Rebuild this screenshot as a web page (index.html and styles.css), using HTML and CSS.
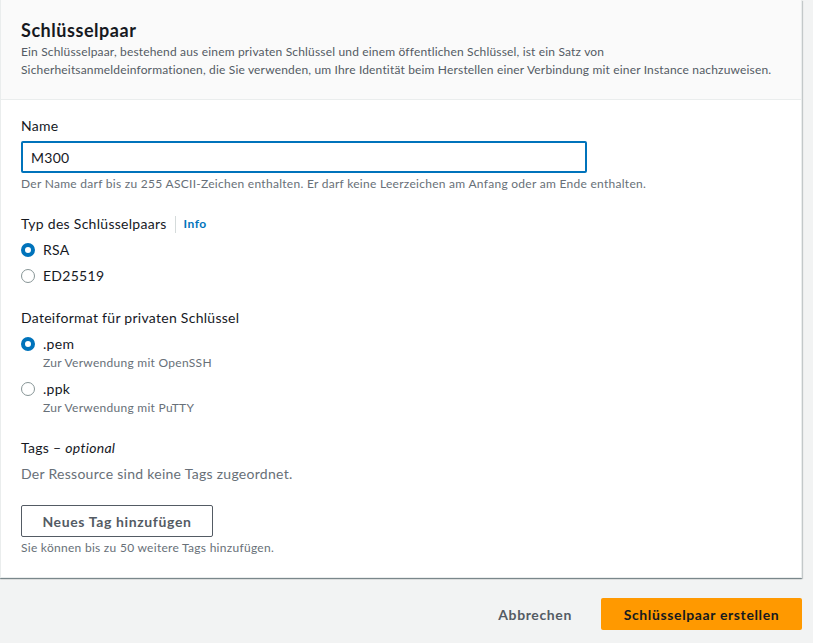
FILE: index.html
```html
<!DOCTYPE html>
<html lang="de">
<head>
<meta charset="utf-8">
<title>Schlüsselpaar erstellen</title>
<link rel="stylesheet" href="styles.css">
</head>
<body>
<div class="page">
  <section class="card">
    <header class="card-header">
      <h2 class="card-title">Schlüsselpaar</h2>
      <p class="card-desc">Ein Schlüsselpaar, bestehend aus einem privaten Schlüssel und einem öffentlichen Schlüssel, ist ein Satz von Sicherheitsanmeldeinformationen, die Sie verwenden, um Ihre Identität beim Herstellen einer Verbindung mit einer Instance nachzuweisen.</p>
    </header>
    <div class="card-body">
      <div class="field">
        <label class="label">Name</label>
        <div class="input">M300</div>
        <div class="hint">Der Name darf bis zu 255 ASCII-Zeichen enthalten. Er darf keine Leerzeichen am Anfang oder am Ende enthalten.</div>
      </div>

      <div class="field">
        <div class="label label-row"><span>Typ des Schlüsselpaars</span><span class="sep"></span><a class="info">Info</a></div>
        <div class="radios">
          <div class="radio"><span class="dot checked"></span><div class="rtext"><div class="rlabel">RSA</div></div></div>
          <div class="radio"><span class="dot"></span><div class="rtext"><div class="rlabel">ED25519</div></div></div>
        </div>
      </div>

      <div class="field">
        <div class="label">Dateiformat für privaten Schlüssel</div>
        <div class="radios radios-desc">
          <div class="radio"><span class="dot checked"></span><div class="rtext"><div class="rlabel">.pem</div><div class="rdesc">Zur Verwendung mit OpenSSH</div></div></div>
          <div class="radio"><span class="dot"></span><div class="rtext"><div class="rlabel">.ppk</div><div class="rdesc">Zur Verwendung mit PuTTY</div></div></div>
        </div>
      </div>

      <div class="field">
        <div class="label">Tags – <i>optional</i></div>
        <div class="empty">Der Ressource sind keine Tags zugeordnet.</div>
        <button class="btn-normal">Neues Tag hinzufügen</button>
        <div class="hint hint-tight">Sie können bis zu 50 weitere Tags hinzufügen.</div>
      </div>
    </div>
  </section>
  <footer class="actions">
    <button class="btn-link">Abbrechen</button>
    <button class="btn-primary">Schlüsselpaar erstellen</button>
  </footer>
</div>
</body>
</html>
```

FILE: styles.css
```css
* { box-sizing: border-box; }
html, body { margin: 0; padding: 0; }
body {
  background: #f2f3f3;
  font-family: Lato, "Open Sans", Arial, sans-serif;
  color: #16191f;
  font-size: 14px;
  letter-spacing: 0.02em;
  width: 813px;
  height: 643px;
  overflow: hidden;
}
.page { width: 802px; }
.card {
  background: #fff;
  border: 1px solid #eaeded;
  border-top: 0;
  box-shadow: 0 1px 1px 0 rgba(0, 28, 36, 0.3), 1px 1px 1px 0 rgba(0, 28, 36, 0.15), -1px 1px 1px 0 rgba(0, 28, 36, 0.15);
}
.card-header {
  background: #fafafa;
  border-bottom: 1px solid #eaeded;
  padding: 19px 10px 20px 20px;
}
.card-title {
  margin: 0;
  font-size: 18px;
  line-height: 22px;
  font-weight: 700;
  letter-spacing: 0.03em;
  color: #16191f;
}
.card-desc {
  margin: 2px 0 0 0;
  max-width: 762px;
  font-size: 12px;
  line-height: 18px;
  letter-spacing: 0.014em;
  color: #545b64;
}
.card-body {
  padding: 15px 20px 21px 20px;
  display: flex;
  flex-direction: column;
  gap: 21px;
}
.field { display: flex; flex-direction: column; }
.label {
  font-size: 14px;
  line-height: 22px;
  color: #16191f;
}
.label-row { display: flex; align-items: center; }
.sep {
  width: 1px;
  height: 17px;
  background: #d5dbdb;
  margin: 0 8px 0 8px;
}
.info {
  font-size: 12px;
  font-weight: 700;
  letter-spacing: 0.04em;
  color: #0073bb;
}
.input {
  margin-top: 4px;
  width: 566px;
  height: 32px;
  border: 2px solid #0073bb;
  border-radius: 2px;
  padding: 0 8px;
  display: flex;
  align-items: center;
  font-size: 14px;
  color: #16191f;
}
.hint {
  margin-top: 3px;
  font-size: 12px;
  line-height: 16px;
  color: #687078;
}
.hint-tight { margin-top: 3px; }
.radios { display: flex; flex-direction: column; gap: 6px; margin-top: 5px; }
.radios-desc { gap: 8px; margin-top: 5px; }
.radio { display: flex; align-items: flex-start; gap: 8px; }
.dot {
  flex: none;
  width: 14px;
  height: 14px;
  margin-top: 3px;
  border-radius: 50%;
  border: 1px solid #879596;
  background: #fff;
}
.dot.checked {
  border: 4px solid #0073bb;
}
.rlabel { font-size: 14px; line-height: 20px; color: #16191f; }
.rdesc { margin-top: 1px; font-size: 12px; line-height: 16px; color: #687078; }
.empty {
  margin-top: 4px;
  font-size: 14px;
  line-height: 22px;
  color: #687078;
}
.btn-normal {
  margin-top: 20px;
  align-self: flex-start;
  width: 192px;
  height: 32px;
  border: 1px solid #545b64;
  border-radius: 2px;
  background: #fff;
  color: #545b64;
  font-family: inherit;
  font-size: 14px;
  font-weight: 700;
  letter-spacing: 0.045em;
  padding: 0 10px;
}
.actions {
  display: flex;
  justify-content: flex-end;
  align-items: center;
  gap: 9px;
  padding-top: 20px;
}
.btn-link {
  border: 0;
  background: none;
  color: #545b64;
  font-family: inherit;
  font-size: 14px;
  font-weight: 700;
  letter-spacing: 0.045em;
  padding: 0 20px;
  height: 32px;
}
.btn-primary {
  width: 201px;
  height: 32px;
  border: 0;
  border-radius: 2px;
  background: #ff9900;
  color: #16191f;
  font-family: inherit;
  font-size: 14px;
  font-weight: 700;
  letter-spacing: 0.045em;
  padding: 0 10px;
}
```
